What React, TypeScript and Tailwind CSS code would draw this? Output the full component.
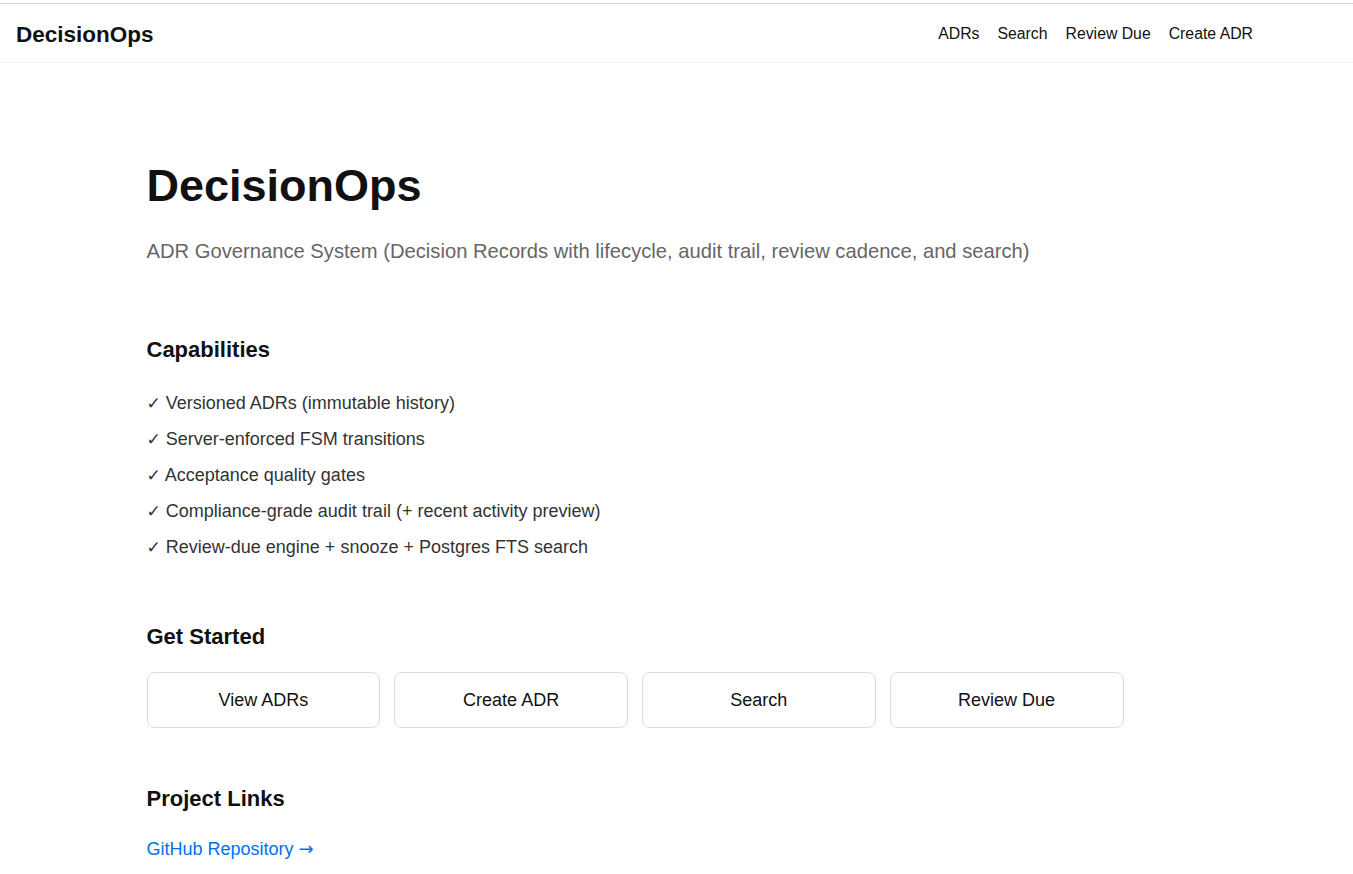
const capabilities = [
  "Versioned ADRs (immutable history)",
  "Server-enforced FSM transitions",
  "Acceptance quality gates",
  "Compliance-grade audit trail (+ recent activity preview)",
  "Review-due engine + snooze + Postgres FTS search",
];

const navLinks = ["ADRs", "Search", "Review Due", "Create ADR"];

const actions = ["View ADRs", "Create ADR", "Search", "Review Due"];

const App = () => {
  return (
    <div className="min-h-screen bg-white pt-[3px] font-['Liberation_Sans',Arial,sans-serif] text-[#111]">
      {/* Header */}
      <header className="flex h-[60px] items-center justify-between border-t border-b border-t-[#d4d4d4] border-b-[#eeeeee] pl-4 pr-[100px]">
        <div className="mt-[3px] text-[22.5px] font-bold">DecisionOps</div>
        <nav className="mt-[1px] flex items-center gap-[18px] text-[15.8px]">
          {navLinks.map((link) => (
            <a key={link} href="#" className="text-[#111]">
              {link}
            </a>
          ))}
        </nav>
      </header>

      <main className="mx-auto w-[1060px] pt-[100px] pb-10">
        <h1 className="text-[45px] font-bold leading-none text-[#111]">DecisionOps</h1>
        <p className="mt-[28px] text-[20.2px] text-[#666]">
          ADR Governance System (Decision Records with lifecycle, audit trail, review cadence, and search)
        </p>

        {/* Capabilities */}
        <section className="mt-[67px]">
          <h2 className="text-[22px] font-bold">Capabilities</h2>
          <ul className="mt-[24px] flex flex-col gap-[9px] text-[18px] leading-[27px] text-[#333]">
            {capabilities.map((item) => (
              <li key={item}>
                <span className="font-['DejaVu_Sans',sans-serif] text-[17px]">✓</span> {item}
              </li>
            ))}
          </ul>
        </section>

        {/* Get Started */}
        <section className="mt-[59px]">
          <h2 className="text-[22px] font-bold">Get Started</h2>
          <div className="mt-[19px] grid w-[977px] grid-cols-4 gap-[14px]">
            {actions.map((action) => (
              <button
                key={action}
                className="h-[56px] rounded-lg border border-[#dddddd] bg-white text-[18px] text-[#111]"
              >
                {action}
              </button>
            ))}
          </div>
        </section>

        {/* Project Links */}
        <section className="mt-[54px]">
          <h2 className="text-[22px] font-bold">Project Links</h2>
          <a href="#" className="mt-[20px] inline-block text-[18px] text-[#0070f3]">
            GitHub Repository <span className="font-['DejaVu_Sans',sans-serif] text-[18px]">→</span>
          </a>
        </section>
      </main>
    </div>
  );
};

export default App;
